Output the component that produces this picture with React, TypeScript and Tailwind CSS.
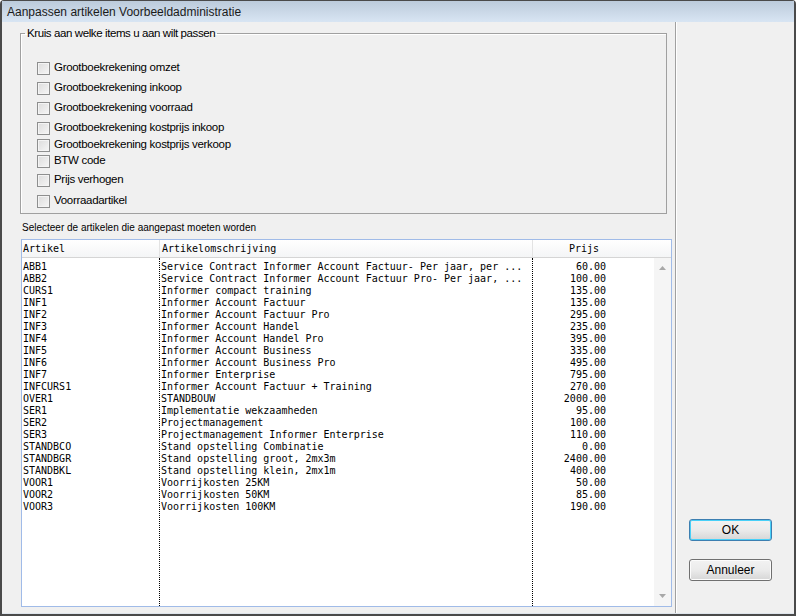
import React from 'react';

const ui = { fontFamily: '"Liberation Sans", Arial, sans-serif' };
const mono = { fontFamily: '"DejaVu Sans Mono", "Liberation Mono", monospace' };

const opties = [
  { label: 'Grootboekrekening omzet', mt: 'mt-[19px]' },
  { label: 'Grootboekrekening inkoop', mt: 'mt-[4px]' },
  { label: 'Grootboekrekening voorraad', mt: 'mt-[4px]' },
  { label: 'Grootboekrekening kostprijs inkoop', mt: 'mt-[4px]' },
  { label: 'Grootboekrekening kostprijs verkoop', mt: 'mt-[1px]' },
  { label: 'BTW code', mt: 'mt-0' },
  { label: 'Prijs verhogen', mt: 'mt-[3px]' },
  { label: 'Voorraadartikel', mt: 'mt-[5px]' },
];

const artikelen: [string, string, string][] = [
  ['ABB1', 'Service Contract Informer Account Factuur- Per jaar, per ...', '60.00'],
  ['ABB2', 'Service Contract Informer Account Factuur Pro- Per jaar, ...', '100.00'],
  ['CURS1', 'Informer compact training', '135.00'],
  ['INF1', 'Informer Account Factuur', '135.00'],
  ['INF2', 'Informer Account Factuur Pro', '295.00'],
  ['INF3', 'Informer Account Handel', '235.00'],
  ['INF4', 'Informer Account Handel Pro', '395.00'],
  ['INF5', 'Informer Account Business', '335.00'],
  ['INF6', 'Informer Account Business Pro', '495.00'],
  ['INF7', 'Informer Enterprise', '795.00'],
  ['INFCURS1', 'Informer Account Factuur + Training', '270.00'],
  ['OVER1', 'STANDBOUW', '2000.00'],
  ['SER1', 'Implementatie wekzaamheden', '95.00'],
  ['SER2', 'Projectmanagement', '100.00'],
  ['SER3', 'Projectmanagement Informer Enterprise', '110.00'],
  ['STANDBCO', 'Stand opstelling Combinatie', '0.00'],
  ['STANDBGR', 'Stand opstelling groot, 2mx3m', '2400.00'],
  ['STANDBKL', 'Stand opstelling klein, 2mx1m', '400.00'],
  ['VOOR1', 'Voorrijkosten 25KM', '50.00'],
  ['VOOR2', 'Voorrijkosten 50KM', '85.00'],
  ['VOOR3', 'Voorrijkosten 100KM', '190.00'],
];

function Checkbox({ label, mt }: { label: string; mt: string }) {
  return (
    <div className={`flex h-4 items-center ${mt}`}>
      <span className="ml-[16px] h-[13px] w-[13px] border border-[#8e8f8f] bg-gradient-to-br from-[#dcdcdc] to-[#f6f6f6] shadow-[inset_0_0_0_1px_#f4f4f4]" />
      <span className="ml-[4px] text-[11.5px] tracking-[-0.3px] text-black">{label}</span>
    </div>
  );
}

function Button({ children, isDefault }: { children: React.ReactNode; isDefault?: boolean }) {
  return (
    <button
      className={`h-[22px] w-[83px] rounded-[3px] border bg-gradient-to-b from-[#f2f2f2] via-[#ebebeb] to-[#d6d6d6] text-[12px] text-black ${
        isDefault ? 'border-[#3c7fb1] shadow-[inset_0_0_0_1px_#48d0f8]' : 'border-[#707070] shadow-[inset_0_0_0_1px_#fcfcfc]'
      }`}
    >
      {children}
    </button>
  );
}

export default function App() {
  return (
    <div
      className="flex h-[616px] w-[796px] flex-col rounded-t-[4px] border-x-2 border-t border-b-2 border-[#4a4a4a] bg-[#f0f0f0]"
      style={ui}
    >
      <div className="flex h-[21px] items-center bg-gradient-to-b from-[#bccbdb] to-[#d8e5f3] pl-[5px] text-[12px] text-[#1a1a1a]">
        Aanpassen artikelen Voorbeeldadministratie
      </div>

      <div className="flex flex-1 border-b border-[#dfe5ec]">
        {/* linker deel */}
        <div className="flex w-[674px] flex-col border-r border-[#a0a0a0] pl-[18px]">
          <fieldset className="mt-[3px] h-[189px] w-[647px] border border-[#a0a0a0] shadow-[inset_1px_1px_0_#fff]">
            <legend className="ml-[4px] px-[2px] text-[11.5px] leading-4 tracking-[-0.4px] text-black">
              Kruis aan welke items u aan wilt passen
            </legend>
            {opties.map((o) => (
              <Checkbox key={o.label} label={o.label} mt={o.mt} />
            ))}
          </fieldset>

          <p className="ml-[2px] mt-[8px] h-[12px] text-[10px] leading-[12px] text-black">
            Selecteer de artikelen die aangepast moeten worden
          </p>

          <div className="ml-[1px] mt-[5px] flex h-[368px] w-[651px] flex-col border border-[#a0bbe8] bg-white" style={mono}>
            <div className="flex h-[18px] border-b border-[#d5d5d5] bg-gradient-to-b from-white to-[#f4f5f6] text-[10px] leading-[18px] text-black">
              <div className="w-[137px] pl-[1px]">Artikel</div>
              <div className="w-px bg-[#e3e3e3]" />
              <div className="w-[372px] pl-[2px]">Artikelomschrijving</div>
              <div className="w-px bg-[#e3e3e3]" />
              <div className="flex-1 pl-[36px]">Prijs</div>
            </div>
            <div className="flex flex-1 text-[10px] leading-[12px] text-black">
              <div className="w-[138px] border-r border-dotted border-black pl-[1px] pt-[3px]">
                {artikelen.map((a) => (
                  <div key={a[0]}>{a[0]}</div>
                ))}
              </div>
              <div className="w-[373px] border-r border-dotted border-black pl-[1px] pt-[3px]">
                {artikelen.map((a) => (
                  <div key={a[0]} className="whitespace-pre">{a[1]}</div>
                ))}
              </div>
              <div className="w-[121px] pr-[48px] pt-[3px] text-right">
                {artikelen.map((a) => (
                  <div key={a[0]}>{a[2]}</div>
                ))}
              </div>
              <div className="flex w-[17px] flex-col items-center justify-between bg-[#f5f5f5] py-[8px]">
                <svg width="7" height="4" viewBox="0 0 7 4">
                  <path d="M3.5 0 L7 4 L0 4 Z" fill="#a8a8a8" />
                </svg>
                <svg width="7" height="4" viewBox="0 0 7 4">
                  <path d="M0 0 L7 0 L3.5 4 Z" fill="#a8a8a8" />
                </svg>
              </div>
            </div>
          </div>
        </div>

        {/* knoppen */}
        <div className="flex flex-1 flex-col border-l border-white pl-[12px] pt-[497px]">
          <Button isDefault>OK</Button>
          <div className="h-[18px]" />
          <Button>Annuleer</Button>
        </div>
      </div>
    </div>
  );
}
